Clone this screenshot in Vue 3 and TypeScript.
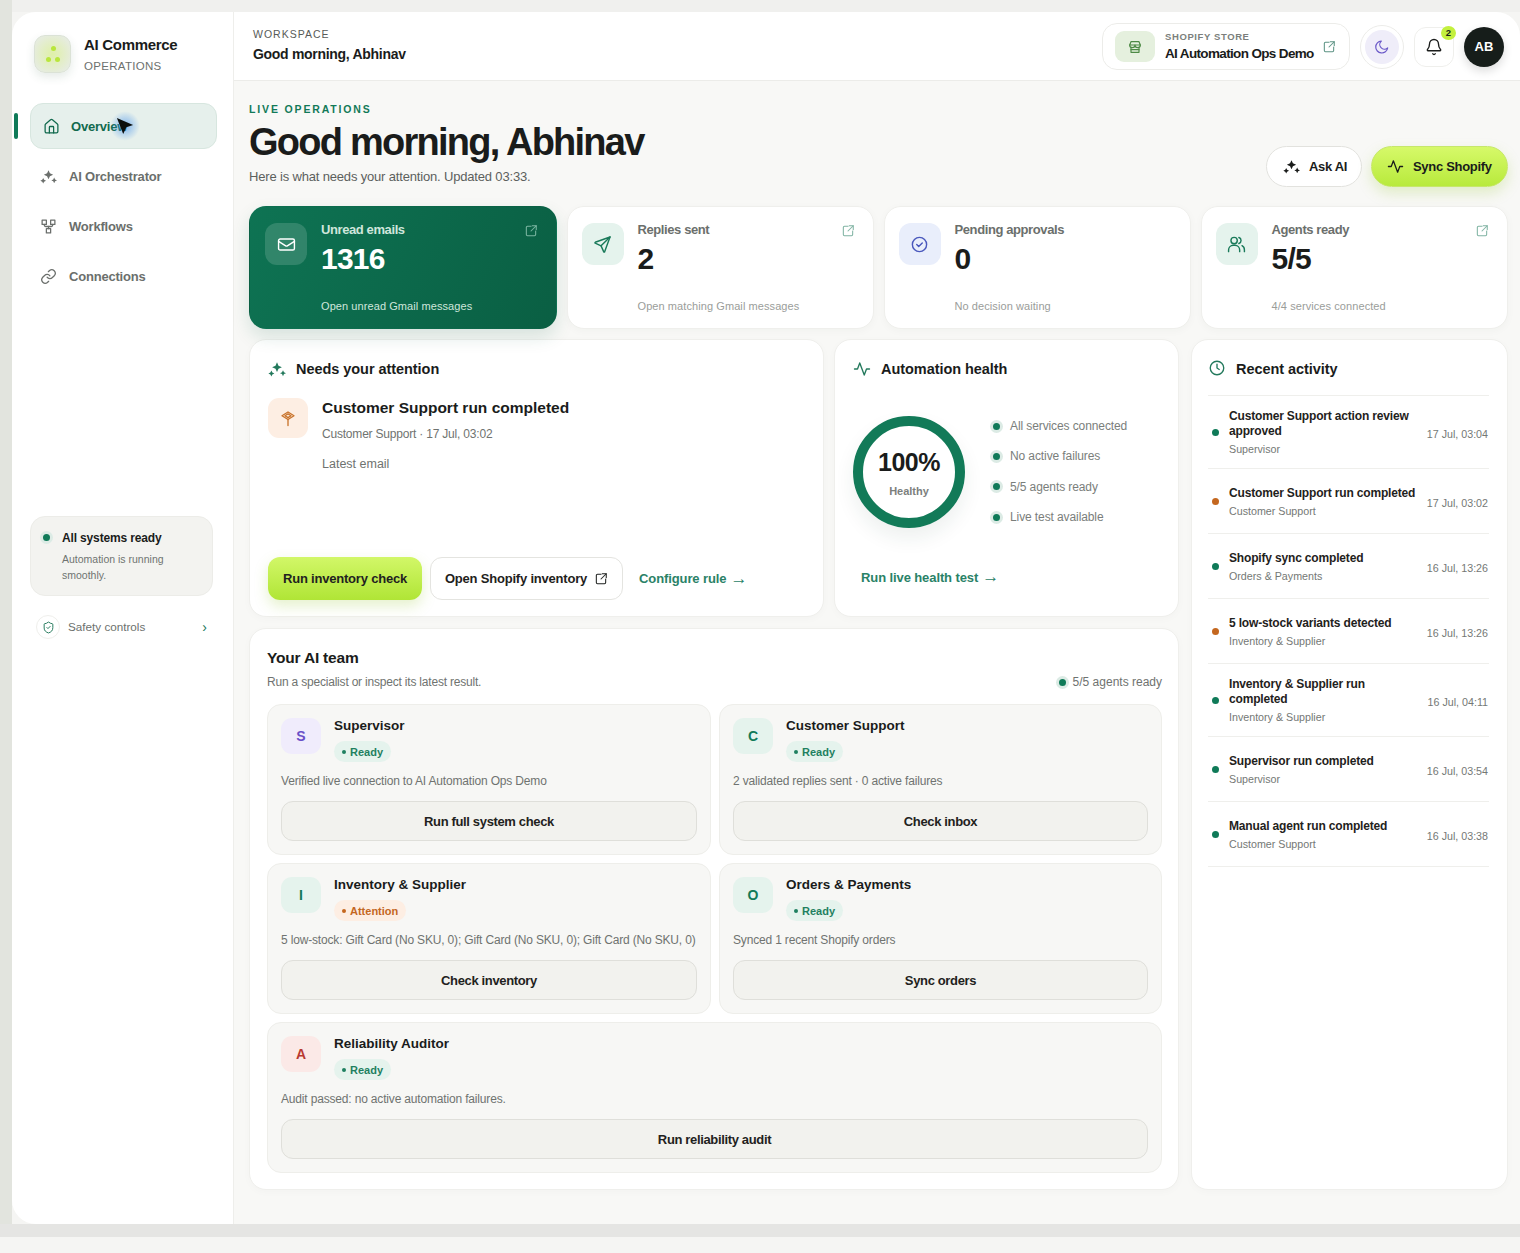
<script setup lang="ts">
import { h } from 'vue'

const paths: Record<string, string[]> = {
  home: ['M15 21v-8a1 1 0 0 0-1-1h-4a1 1 0 0 0-1 1v8', 'M3 10a2 2 0 0 1 .7-1.5l7-6a2 2 0 0 1 2.6 0l7 6a2 2 0 0 1 .7 1.5v9a2 2 0 0 1-2 2H5a2 2 0 0 1-2-2z'],
  workflow: ['M3 3h6v6H3z', 'M15 3h6v6h-6z', 'M9 15h6v6H9z', 'M6 9v1a2 2 0 0 0 2 2h8a2 2 0 0 0 2-2V9', 'M12 12v3'],
  chain: ['M10 13a5 5 0 0 0 7.5.5l3-3a5 5 0 0 0-7-7l-1.700 1.700', 'M14 11a5 5 0 0 0-7.500-.5l-3 3a5 5 0 0 0 7 7l1.700-1.700'],
  mail: ['M4 5h16a2 2 0 0 1 2 2v10a2 2 0 0 1-2 2H4a2 2 0 0 1-2-2V7a2 2 0 0 1 2-2z', 'm22 8-8.970 5.700a1.940 1.940 0 0 1-2.060 0L2 8'],
  send: ['M21.500 2.500 2.800 9.200a.6.6 0 0 0 0 1.100l7.400 3.400 3.400 7.600a.6.6 0 0 0 1.100 0z', 'M21.500 2.500 10.200 13.700'],
  check: ['M12 3a9 9 0 1 0 0 18 9 9 0 0 0 0-18z', 'm8.500 12 2.500 2.500 4.500-4.500'],
  users: ['M9 3a4 4 0 1 0 0 8 4 4 0 0 0 0-8z', 'M2 21v-2a6 6 0 0 1 6-6h2a6 6 0 0 1 6 6v2', 'M15 3.200a4 4 0 0 1 0 7.600', 'M19 13.500a6 6 0 0 1 3 5.500v2'],
  out: ['M12 4H6a2 2 0 0 0-2 2v12a2 2 0 0 0 2 2h12a2 2 0 0 0 2-2v-6', 'M14 3h7v7', 'M21 3l-9 9'],
  store: ['M6 4h12l2 5H4z', 'M4 9a2.500 2.500 0 0 0 8 0 2.500 2.500 0 0 0 8 0', 'M6 13v7h12v-7', 'M6 16h12'],
  moon: ['M20.500 13.500A9 9 0 1 1 11 3a7 7 0 0 0 9.500 10.500z'],
  bell: ['M10.300 21a2 2 0 0 0 3.400 0', 'M3.300 15.300A1 1 0 0 0 4 17h16a1 1 0 0 0 .7-1.700C19.400 14 18 12.500 18 8A6 6 0 0 0 6 8c0 4.500-1.400 6-2.700 7.300'],
  pulse: ['M22 12h-4l-3 8L9 4l-3 8H2'],
  clock: ['M12 3a9 9 0 1 0 0 18 9 9 0 0 0 0-18z', 'M12 7v5l3 2'],
  shield: ['M20 13c0 5-3.500 7.500-7.700 9a1 1 0 0 1-.6 0C7.500 20.500 4 18 4 13V6a1 1 0 0 1 1-1c2 0 4.500-1.200 6.200-2.700a1.200 1.200 0 0 1 1.600 0C14.500 3.800 17 5 19 5a1 1 0 0 1 1 1z', 'm9 12 2 2 4-4'],
  sign: ['M12 4l8 5-8 5-8-5z', 'M8 9l4-2.500 4 2.500-4 2.500z', 'M12 14v8'],
}

const Icon = (props: { name: string }) =>
  h(
    'svg',
    {
      viewBox: '0 0 24 24',
      fill: 'none',
      stroke: 'currentColor',
      'stroke-width': 1.8,
      'stroke-linecap': 'round',
      'stroke-linejoin': 'round',
    },
    paths[props.name].map((d) => h('path', { d })),
  )
Icon.props = ['name']

// four-point stars, the product's "AI" mark
const Stars = () =>
  h('svg', { viewBox: '0 0 24 24', fill: 'currentColor' }, [
    h('path', { d: 'M12 3l2 4.500 4.500 2-4.500 2-2 4.500-2-4.500-4.500-2 4.500-2z' }),
    h('path', { d: 'M4.500 14l1.300 2.700 2.700 1.300-2.700 1.300-1.300 2.700-1.300-2.700L.5 18l2.700-1.300z' }),
    h('path', { d: 'M20 13.500l1.300 2.700 2.700 1.300-2.700 1.300-1.300 2.700-1.300-2.700-2.700-1.300 2.700-1.300z' }),
  ])

const navItems = [
  { label: 'AI Orchestrator', icon: 'stars' },
  { label: 'Workflows', icon: 'workflow' },
  { label: 'Connections', icon: 'chain' },
]

const kpis = [
  { label: 'Unread emails', value: '1316', note: 'Open unread Gmail messages', icon: 'mail', tone: 'hero', link: true },
  { label: 'Replies sent', value: '2', note: 'Open matching Gmail messages', icon: 'send', tone: 'green', link: true },
  { label: 'Pending approvals', value: '0', note: 'No decision waiting', icon: 'check', tone: 'blue', link: false },
  { label: 'Agents ready', value: '5/5', note: '4/4 services connected', icon: 'users', tone: 'green', link: true },
]

const healthItems = ['All services connected', 'No active failures', '5/5 agents ready', 'Live test available']

const agents = [
  { letter: 'S', name: 'Supervisor', status: 'Ready', text: 'Verified live connection to AI Automation Ops Demo', action: 'Run full system check', tone: 'violet' },
  { letter: 'C', name: 'Customer Support', status: 'Ready', text: '2 validated replies sent · 0 active failures', action: 'Check inbox', tone: 'mint' },
  { letter: 'I', name: 'Inventory & Supplier', status: 'Attention', text: '5 low-stock: Gift Card (No SKU, 0); Gift Card (No SKU, 0); Gift Card (No SKU, 0)', action: 'Check inventory', tone: 'mint' },
  { letter: 'O', name: 'Orders & Payments', status: 'Ready', text: 'Synced 1 recent Shopify orders', action: 'Sync orders', tone: 'mint' },
  { letter: 'A', name: 'Reliability Auditor', status: 'Ready', text: 'Audit passed: no active automation failures.', action: 'Run reliability audit', tone: 'red' },
]

const activity = [
  { title: 'Customer Support action review approved', sub: 'Supervisor', time: '17 Jul, 03:04', warn: false },
  { title: 'Customer Support run completed', sub: 'Customer Support', time: '17 Jul, 03:02', warn: true },
  { title: 'Shopify sync completed', sub: 'Orders & Payments', time: '16 Jul, 13:26', warn: false },
  { title: '5 low-stock variants detected', sub: 'Inventory & Supplier', time: '16 Jul, 13:26', warn: true },
  { title: 'Inventory & Supplier run completed', sub: 'Inventory & Supplier', time: '16 Jul, 04:11', warn: false },
  { title: 'Supervisor run completed', sub: 'Supervisor', time: '16 Jul, 03:54', warn: false },
  { title: 'Manual agent run completed', sub: 'Customer Support', time: '16 Jul, 03:38', warn: false },
]
</script>

<template>
  <div class="page">
    <div class="frame">
      <aside class="sidebar">
        <div class="brand">
          <div class="logo">
            <span class="seed seed-top"></span>
            <span class="seed seed-left"></span>
            <span class="seed seed-right"></span>
          </div>
          <div>
            <div class="brand-name">AI Commerce</div>
            <div class="brand-sub">OPERATIONS</div>
          </div>
        </div>

        <nav class="nav">
          <span class="nav-marker"></span>
          <a class="nav-item nav-active">
            <Icon name="home" class="nav-icon" />
            <span>Overview</span>
          </a>
          <a v-for="item in navItems" :key="item.label" class="nav-item">
            <Stars v-if="item.icon === 'stars'" class="nav-icon" />
            <Icon v-else :name="item.icon" class="nav-icon" />
            <span>{{ item.label }}</span>
          </a>
          <!-- pointer caught in the capture -->
          <span class="cursor-glow"></span>
          <svg class="cursor" viewBox="0 0 20 20">
            <path d="M1 1l18 8-7.500 2.500L8 19z" fill="#0b0f0d" />
          </svg>
        </nav>

        <div class="system-card">
          <span class="dot dot-halo"></span>
          <div>
            <div class="system-title">All systems ready</div>
            <div class="system-text">Automation is running smoothly.</div>
          </div>
        </div>

        <div class="safety">
          <span class="safety-icon"><Icon name="shield" /></span>
          <span class="safety-label">Safety controls</span>
          <span class="safety-arrow">›</span>
        </div>
      </aside>

      <div class="content">
        <header class="topbar">
          <div class="topbar-left">
            <div class="workspace">WORKSPACE</div>
            <div class="greeting">Good morning, Abhinav</div>
          </div>
          <div class="topbar-right">
            <div class="store">
              <span class="store-icon"><Icon name="store" /></span>
              <div class="store-text">
                <div class="store-label">SHOPIFY STORE</div>
                <div class="store-name">AI Automation Ops Demo</div>
              </div>
              <Icon name="out" class="store-out" />
            </div>
            <div class="theme-ring">
              <span class="theme-btn"><Icon name="moon" /></span>
            </div>
            <div class="bell">
              <Icon name="bell" />
              <span class="bell-badge">2</span>
            </div>
            <div class="avatar">AB</div>
          </div>
        </header>

        <main class="main">
          <section class="hero">
            <div>
              <div class="eyebrow">LIVE OPERATIONS</div>
              <h1>Good morning, Abhinav</h1>
              <p>Here is what needs your attention. Updated 03:33.</p>
            </div>
            <div class="hero-actions">
              <button class="ask"><Stars />Ask AI</button>
              <button class="sync"><Icon name="pulse" />Sync Shopify</button>
            </div>
          </section>

          <section class="kpis">
            <div v-for="kpi in kpis" :key="kpi.label" class="kpi" :class="{ 'kpi-hero': kpi.tone === 'hero' }">
              <span class="kpi-icon" :class="'tone-' + kpi.tone"><Icon :name="kpi.icon" /></span>
              <div class="kpi-body">
                <div class="kpi-label">{{ kpi.label }}</div>
                <div class="kpi-value">{{ kpi.value }}</div>
                <div class="kpi-note">{{ kpi.note }}</div>
              </div>
              <Icon v-if="kpi.link" name="out" class="kpi-out" />
            </div>
          </section>

          <section class="board">
            <div class="board-left">
              <div class="row-two">
                <div class="card attention">
                  <h2 class="card-title"><Stars class="title-icon" />Needs your attention</h2>
                  <div class="attention-item">
                    <span class="attention-icon"><Icon name="sign" /></span>
                    <div>
                      <div class="attention-title">Customer Support run completed</div>
                      <div class="attention-meta">Customer Support · 17 Jul, 03:02</div>
                      <div class="attention-text">Latest email</div>
                    </div>
                  </div>
                  <div class="attention-actions">
                    <button class="primary">Run inventory check</button>
                    <button class="secondary">Open Shopify inventory <Icon name="out" /></button>
                    <a class="text-link">Configure rule<span class="arrow">→</span></a>
                  </div>
                </div>

                <div class="card health">
                  <h2 class="card-title"><Icon name="pulse" class="title-icon" />Automation health</h2>
                  <div class="health-body">
                    <div class="ring">
                      <div class="ring-value">100%</div>
                      <div class="ring-label">Healthy</div>
                    </div>
                    <ul class="health-list">
                      <li v-for="item in healthItems" :key="item"><span class="dot dot-halo"></span>{{ item }}</li>
                    </ul>
                  </div>
                  <a class="text-link health-link">Run live health test<span class="arrow">→</span></a>
                </div>
              </div>

              <div class="card team">
                <div class="team-head">
                  <div>
                    <h2 class="team-title">Your AI team</h2>
                    <div class="team-sub">Run a specialist or inspect its latest result.</div>
                  </div>
                  <div class="team-ready"><span class="dot dot-halo"></span>5/5 agents ready</div>
                </div>
                <div class="agents">
                  <div v-for="agent in agents" :key="agent.name" class="agent" :class="{ 'agent-wide': agent.letter === 'A' }">
                    <div class="agent-top">
                      <span class="agent-letter" :class="'letter-' + agent.tone">{{ agent.letter }}</span>
                      <div>
                        <div class="agent-name">{{ agent.name }}</div>
                        <span class="badge" :class="{ 'badge-warn': agent.status === 'Attention' }">
                          <i></i>{{ agent.status }}
                        </span>
                      </div>
                    </div>
                    <div class="agent-text">{{ agent.text }}</div>
                    <button class="agent-btn">{{ agent.action }}</button>
                  </div>
                </div>
              </div>
            </div>

            <div class="card activity">
              <h2 class="card-title activity-title"><Icon name="clock" class="title-icon" />Recent activity</h2>
              <div v-for="row in activity" :key="row.title + row.time" class="activity-row">
                <span class="dot" :class="{ 'dot-warn': row.warn }"></span>
                <div class="activity-main">
                  <div class="activity-name">{{ row.title }}</div>
                  <div class="activity-sub">{{ row.sub }}</div>
                </div>
                <div class="activity-time">{{ row.time }}</div>
              </div>
            </div>
          </section>
        </main>
      </div>
    </div>
  </div>
</template>

<style>
html,
body {
  margin: 0;
  background: #f5f5f3;
}
</style>

<style scoped>
.page {
  width: 1520px;
  height: 1253px;
  box-sizing: border-box;
  padding: 12px 0 0 12px;
  overflow: hidden;
  font-family: 'Liberation Sans', Arial, sans-serif;
  color: #1a1c1b;
  background:
    linear-gradient(#e5e5e3, #e5e5e3) 0 1224px / 100% 13px no-repeat,
    linear-gradient(90deg, #e2e4de 12px, transparent 12px) 0 0 / 100% 1237px no-repeat,
    linear-gradient(#f0f0ee, #f0f0ee) 0 0 / 100% 12px no-repeat,
    #f5f5f3;
}

.frame {
  display: flex;
  width: 1508px;
  height: 1212px;
  border-radius: 24px 24px 0 24px;
  overflow: hidden;
  background: #f8f8f6;
}

.sidebar {
  flex: 0 0 220px;
  box-sizing: border-box;
  padding: 23px 16px 0 18px;
  background: #fff;
  border-right: 1px solid #eeeeeb;
}

.brand {
  display: flex;
  align-items: center;
  gap: 13px;
  margin-left: 4px;
  height: 38px;
}

.logo {
  position: relative;
  flex: none;
  width: 37px;
  height: 38px;
  border: 1px solid #dbe2d6;
  border-radius: 11px;
  box-sizing: border-box;
  background: radial-gradient(circle at 50% 50%, #dff0a8, #e6ecdf 80%);
  box-shadow: 0 4px 10px rgba(40, 90, 60, 0.12);
}

.seed {
  position: absolute;
  width: 5px;
  height: 5px;
  border-radius: 50%;
  background: #b9e63c;
}

.seed-top {
  left: 16px;
  top: 10px;
}

.seed-left {
  left: 11px;
  top: 21px;
}

.seed-right {
  left: 20px;
  top: 21px;
}

.brand-name {
  font-size: 15px;
  font-weight: 700;
  letter-spacing: -0.3px;
  line-height: 20px;
}

.brand-sub {
  margin-top: 3px;
  font-size: 11.5px;
  letter-spacing: 0.3px;
  line-height: 16px;
  color: #6d716e;
}

.nav {
  position: relative;
  display: flex;
  flex-direction: column;
  gap: 4px;
  margin-top: 30px;
}

.nav-marker {
  position: absolute;
  left: -16px;
  top: 10px;
  width: 4px;
  height: 26px;
  border-radius: 2px;
  background: #0f7a58;
}

.nav-item {
  display: flex;
  align-items: center;
  gap: 12px;
  height: 46px;
  padding-left: 10px;
  font-size: 13px;
  font-weight: 700;
  letter-spacing: -0.2px;
  color: #6b6f6c;
}

.nav-active {
  width: 187px;
  box-sizing: border-box;
  padding-left: 12px;
  gap: 11px;
  border: 1px solid #d7e6df;
  border-radius: 13px;
  background: #e6f0ec;
  color: #126a4e;
}

.nav-icon {
  flex: none;
  width: 17px;
  height: 17px;
}

.cursor-glow {
  position: absolute;
  left: 80px;
  top: 8px;
  width: 30px;
  height: 30px;
  border-radius: 50%;
  background: radial-gradient(circle, rgba(60, 140, 235, 0.6), rgba(60, 140, 235, 0) 70%);
}

.cursor {
  position: absolute;
  left: 86px;
  top: 14px;
  width: 18px;
  height: 18px;
}

.system-card {
  display: flex;
  align-items: flex-start;
  gap: 12px;
  width: 183px;
  height: 80px;
  box-sizing: border-box;
  margin-top: 217px;
  padding: 14px 12px;
  border: 1px solid #ecece8;
  border-radius: 15px;
  background: #f3f3f0;
}

.system-title {
  font-size: 12px;
  font-weight: 700;
  letter-spacing: -0.15px;
  line-height: 15px;
}

.system-text {
  margin-top: 5px;
  font-size: 10.5px;
  line-height: 16px;
  color: #6f7370;
}

.dot {
  display: inline-block;
  flex: none;
  width: 7px;
  height: 7px;
  border-radius: 50%;
  background: #0f7a58;
}

.dot-halo {
  box-shadow: 0 0 0 3px #dcebe5;
}

.dot-warn {
  background: #c4671f;
}

.system-card .dot {
  margin-top: 3px;
}

.safety {
  display: flex;
  align-items: center;
  width: 183px;
  margin-top: 19px;
  padding-left: 6px;
  box-sizing: border-box;
}

.safety-icon {
  display: flex;
  align-items: center;
  justify-content: center;
  width: 22px;
  height: 22px;
  border: 1px solid #efefec;
  border-radius: 50%;
  color: #23795c;
}

.safety-icon svg {
  width: 13px;
  height: 13px;
}

.safety-label {
  margin-left: 8px;
  margin-top: -2px;
  font-size: 11.7px;
  color: #6d716e;
}

.safety-arrow {
  margin-left: auto;
  margin-right: 6px;
  font-size: 14px;
  color: #23795c;
}

.content {
  flex: 1;
  min-width: 0;
}

.topbar {
  display: flex;
  align-items: center;
  justify-content: space-between;
  height: 69px;
  box-sizing: border-box;
  padding: 0 16px 0 19px;
  background: #fff;
  border-bottom: 1px solid #ecece9;
}

.topbar-left {
  margin-bottom: 4px;
}

.workspace {
  font-size: 10.5px;
  letter-spacing: 1px;
  line-height: 14px;
  color: #575b58;
}

.greeting {
  margin-top: 5px;
  font-size: 14px;
  font-weight: 700;
  letter-spacing: -0.3px;
  line-height: 16px;
}

.topbar-right {
  display: flex;
  align-items: center;
  margin-top: 1px;
}

.store {
  display: flex;
  align-items: center;
  width: 248px;
  height: 47px;
  box-sizing: border-box;
  padding: 0 13px 0 12px;
  border: 1px solid #ecece9;
  border-radius: 15px;
}

.store-icon {
  display: flex;
  align-items: center;
  justify-content: center;
  flex: none;
  width: 40px;
  height: 31px;
  border-radius: 9px;
  background: #e5f0de;
  color: #4d8a45;
}

.store-icon svg {
  width: 16px;
  height: 16px;
}

.store-text {
  flex: 1;
  margin-left: 10px;
}

.store-label {
  font-size: 9.5px;
  letter-spacing: 0.6px;
  font-weight: 700;
  line-height: 12px;
  color: #7b7f7c;
}

.store-name {
  margin-top: 3px;
  font-size: 13.5px;
  font-weight: 700;
  letter-spacing: -0.65px;
  line-height: 16px;
  white-space: nowrap;
}

.store-out {
  flex: none;
  width: 14px;
  height: 14px;
  color: #5c9384;
}

.theme-ring {
  display: flex;
  align-items: center;
  justify-content: center;
  width: 44px;
  height: 44px;
  box-sizing: border-box;
  margin-left: 10px;
  border: 1px solid #ecece9;
  border-radius: 50%;
}

.theme-btn {
  display: flex;
  align-items: center;
  justify-content: center;
  width: 34px;
  height: 34px;
  border-radius: 50%;
  background: #efedf9;
  color: #6a58c8;
}

.theme-btn svg {
  width: 16px;
  height: 16px;
}

.bell {
  position: relative;
  display: flex;
  align-items: center;
  justify-content: center;
  width: 40px;
  height: 40px;
  box-sizing: border-box;
  margin-left: 10px;
  border: 1px solid #efefec;
  border-radius: 12px;
}

.bell svg {
  width: 18px;
  height: 18px;
}

.bell-badge {
  position: absolute;
  right: -3px;
  top: -2px;
  width: 15px;
  height: 14px;
  border-radius: 50%;
  background: #c3f03e;
  font-size: 9.5px;
  font-weight: 700;
  line-height: 14px;
  text-align: center;
}

.avatar {
  display: flex;
  align-items: center;
  justify-content: center;
  width: 40px;
  height: 40px;
  margin-left: 10px;
  border-radius: 50%;
  background: #161d1a;
  color: #fff;
  font-size: 13px;
  font-weight: 700;
  box-shadow: 0 4px 10px rgba(0, 0, 0, 0.14);
}

.main {
  padding: 2px 12px 0 15px;
}

.hero {
  display: flex;
  align-items: flex-end;
  justify-content: space-between;
  height: 103px;
}

.eyebrow {
  font-size: 10.5px;
  font-weight: 700;
  letter-spacing: 1.85px;
  line-height: 13px;
  color: #127a58;
}

h1 {
  margin: 3px 0 0;
  font-size: 38px;
  font-weight: 700;
  letter-spacing: -1.75px;
  line-height: 46px;
}

.hero p {
  margin: 3px 0 0;
  font-size: 13px;
  letter-spacing: -0.17px;
  line-height: 18px;
  color: #5c605d;
}

.hero-actions {
  display: flex;
  gap: 9px;
  margin-bottom: -1px;
}

.hero-actions button {
  display: flex;
  align-items: center;
  gap: 9px;
  height: 41px;
  border-radius: 21px;
  font-family: inherit;
  font-size: 13px;
  font-weight: 700;
  letter-spacing: -0.3px;
  color: #1a1c1b;
}

.hero-actions svg {
  flex: none;
  width: 17px;
  height: 17px;
}

.ask {
  width: 96px;
  padding: 0 0 0 16px;
  border: 1px solid #e2e2de;
  background: #fff;
}

.sync {
  width: 137px;
  padding: 0 0 0 15px;
  border: 1px solid #c6e76a;
  background: linear-gradient(#d6f969, #b8ea3c);
  box-shadow: 0 6px 14px rgba(150, 200, 50, 0.25);
}

.kpis {
  display: grid;
  grid-template-columns: 307.5px 307px 307px 307px;
  gap: 10px;
  margin-top: 20px;
}

.kpi {
  position: relative;
  display: flex;
  height: 123px;
  box-sizing: border-box;
  padding: 16px 16px 16px 14px;
  border: 1px solid #efefec;
  border-radius: 17px;
  background: #fff;
  box-shadow: 0 2px 8px rgba(40, 50, 45, 0.03);
}

.kpi-hero {
  padding-left: 15px;
  border-color: transparent;
  background: linear-gradient(115deg, #0e7353, #0a5f43);
  box-shadow: 0 8px 18px rgba(15, 100, 70, 0.14);
  color: #fff;
}

.kpi-icon {
  display: flex;
  align-items: center;
  justify-content: center;
  flex: none;
  width: 42px;
  height: 42px;
  border-radius: 12px;
}

.kpi-icon svg {
  width: 19px;
  height: 19px;
}

.tone-hero {
  background: rgba(255, 255, 255, 0.15);
  color: #fff;
}

.tone-green {
  background: #e5f3ed;
  color: #1a7a5a;
}

.tone-blue {
  background: #e9eefb;
  color: #4a58bd;
}

.kpi-body {
  margin-left: 14px;
}

.kpi-label {
  margin-top: -2px;
  font-size: 13px;
  font-weight: 700;
  letter-spacing: -0.4px;
  line-height: 18px;
  color: #6b6f6c;
}

.kpi-value {
  margin-top: 1px;
  font-size: 30px;
  font-weight: 700;
  line-height: 38px;
  letter-spacing: -0.8px;
}

.kpi-note {
  margin-top: 20px;
  font-size: 11px;
  letter-spacing: 0.08px;
  line-height: 16px;
  color: #9a9d9a;
}

.kpi-hero .kpi-label,
.kpi-hero .kpi-note {
  color: #cfe6dc;
}

.kpi-out {
  position: absolute;
  top: 17px;
  right: 18px;
  width: 14px;
  height: 14px;
  color: #7fb3a2;
}

.kpi-hero .kpi-out {
  color: #7cb7a2;
}

.board {
  display: flex;
  gap: 12px;
  margin-top: 10px;
}

.board-left {
  display: flex;
  flex-direction: column;
  gap: 11px;
  width: 930px;
}

.row-two {
  display: flex;
  gap: 10px;
}

.card {
  box-sizing: border-box;
  border: 1px solid #efefec;
  border-radius: 17px;
  background: #fff;
  box-shadow: 0 2px 8px rgba(40, 50, 45, 0.025);
}

.card-title {
  display: flex;
  align-items: center;
  margin: 0;
  font-size: 14.5px;
  font-weight: 700;
  letter-spacing: -0.05px;
  line-height: 20px;
}

.title-icon {
  flex: none;
  width: 18px;
  height: 18px;
  margin-right: 10px;
  color: #23795c;
}

.attention {
  display: flex;
  flex-direction: column;
  width: 575px;
  height: 278px;
  padding: 19px 18px 16px;
}

.attention-item {
  display: flex;
  gap: 14px;
  margin-top: 19px;
}

.attention-icon {
  display: flex;
  align-items: center;
  justify-content: center;
  flex: none;
  width: 40px;
  height: 40px;
  border-radius: 11px;
  background: #fdeee3;
  color: #c9742c;
}

.attention-icon svg {
  width: 18px;
  height: 18px;
}

.attention-title {
  font-size: 15.5px;
  font-weight: 700;
  line-height: 20px;
}

.attention-meta {
  margin-top: 8px;
  font-size: 12px;
  letter-spacing: -0.2px;
  line-height: 16px;
  color: #6f7370;
}

.attention-text {
  margin-top: 14px;
  font-size: 12.5px;
  line-height: 16px;
  color: #6f7370;
}

.attention-actions {
  display: flex;
  align-items: center;
  gap: 8px;
  margin-top: auto;
}

.attention-actions button {
  display: flex;
  align-items: center;
  justify-content: center;
  gap: 7px;
  height: 43px;
  border-radius: 12px;
  font-family: inherit;
  font-size: 13px;
  font-weight: 700;
  letter-spacing: -0.2px;
  color: #1f2220;
}

.primary {
  width: 154px;
  padding: 0;
  border: none;
  background: linear-gradient(#d2f768, #b0e536);
  box-shadow: 0 6px 14px rgba(150, 200, 50, 0.25);
}

.secondary {
  width: 193px;
  padding: 0;
  border: 1px solid #e4e4e0;
  background: #fff;
}

.secondary svg {
  width: 14px;
  height: 14px;
}

.text-link {
  display: inline-flex;
  align-items: center;
  font-size: 13px;
  font-weight: 700;
  letter-spacing: -0.1px;
  color: #2a8267;
}

.arrow {
  margin-left: 4px;
  font-size: 17px;
  font-weight: 400;
  line-height: 16px;
}

.attention-actions .text-link {
  margin-left: 8px;
}

.health {
  display: flex;
  flex-direction: column;
  width: 345px;
  height: 278px;
  padding: 19px 18px;
}

.health-body {
  display: flex;
  margin-top: 37px;
}

.ring {
  display: flex;
  flex-direction: column;
  align-items: center;
  flex: none;
  width: 112px;
  height: 112px;
  box-sizing: border-box;
  border: 10px solid #127a58;
  border-radius: 50%;
  box-shadow: 0 10px 20px rgba(30, 60, 50, 0.08);
}

.ring-value {
  margin-top: 20px;
  font-size: 25px;
  font-weight: 700;
  letter-spacing: -0.5px;
  line-height: 32px;
}

.ring-label {
  margin-top: 6px;
  font-size: 11px;
  font-weight: 700;
  line-height: 14px;
  color: #7c807d;
}

.health-list {
  margin: -5px 0 0 28px;
  padding: 0;
  list-style: none;
}

.health-list li {
  display: flex;
  align-items: center;
  gap: 10px;
  height: 30.3px;
  font-size: 12px;
  letter-spacing: -0.1px;
  color: #7a7e7b;
}

.health-link {
  margin: auto 0 12px 8px;
  align-self: flex-start;
}

.team {
  height: 562px;
  padding: 19px 16px 0 17px;
}

.team-head {
  display: flex;
  align-items: flex-end;
  justify-content: space-between;
}

.team-title {
  margin: 0;
  font-size: 15.5px;
  font-weight: 700;
  letter-spacing: -0.2px;
  line-height: 20px;
}

.team-sub {
  margin-top: 6px;
  font-size: 12px;
  letter-spacing: -0.2px;
  line-height: 16px;
  color: #6f7370;
}

.team-ready {
  display: flex;
  align-items: center;
  gap: 7px;
  font-size: 12px;
  line-height: 16px;
  color: #6f7370;
}

.agents {
  display: grid;
  grid-template-columns: 444px 443px;
  gap: 8px;
  margin-top: 14px;
}

.agent {
  height: 151px;
  box-sizing: border-box;
  padding: 13px 13px;
  border: 1px solid #eeeeea;
  border-radius: 14px;
  background: #f7f7f5;
}

.agent-wide {
  grid-column: 1 / -1;
}

.agent-top {
  display: flex;
  gap: 13px;
}

.agent-letter {
  display: flex;
  align-items: center;
  justify-content: center;
  flex: none;
  width: 40px;
  height: 36px;
  border-radius: 11px;
  font-size: 14px;
  font-weight: 700;
}

.letter-violet {
  background: #f0ecfc;
  color: #6a50c8;
}

.letter-mint {
  background: #e5f3ed;
  color: #127a58;
}

.letter-red {
  background: #fbe9e7;
  color: #b83a32;
}

.agent-name {
  font-size: 13.5px;
  font-weight: 700;
  line-height: 16px;
}

.badge {
  display: inline-flex;
  align-items: center;
  gap: 4px;
  height: 21px;
  margin-top: 7px;
  padding: 0 8px;
  border-radius: 11px;
  background: #e5f3ed;
  font-size: 11px;
  font-weight: 700;
  color: #1f8060;
}

.badge i {
  width: 4px;
  height: 4px;
  border-radius: 50%;
  background: currentColor;
}

.badge-warn {
  background: #fdeee3;
  color: #c4671f;
}

.agent-text {
  margin-top: 11px;
  font-size: 12px;
  letter-spacing: -0.17px;
  line-height: 16px;
  color: #6f7370;
  white-space: nowrap;
}

.agent-btn {
  display: block;
  width: 100%;
  height: 40px;
  margin-top: 12px;
  padding: 0;
  border: 1px solid #dfdfda;
  border-radius: 12px;
  background: #f2f2ee;
  font-family: inherit;
  font-size: 13px;
  font-weight: 700;
  letter-spacing: -0.35px;
  color: #1f2220;
}

.activity {
  width: 317px;
  height: 851px;
  padding: 19px 18px 19px 16px;
}

.activity-title {
  height: 36px;
  align-items: flex-start;
  border-bottom: 1px solid #efefec;
}

.activity-row {
  display: flex;
  align-items: center;
  min-height: 65px;
  box-sizing: border-box;
  padding: 13px 1px 12px 4px;
  border-bottom: 1px solid #efefec;
}

.activity-main {
  flex: 1;
  min-width: 0;
  margin-left: 10px;
}

.activity-name {
  max-width: 195px;
  font-size: 12px;
  font-weight: 700;
  letter-spacing: -0.17px;
  line-height: 15px;
  color: #1f2220;
}

.activity-sub {
  margin-top: 3px;
  font-size: 10.7px;
  line-height: 14px;
  color: #747875;
}

.activity-time {
  flex: none;
  margin-top: 2px;
  font-size: 10.7px;
  color: #747875;
}
</style>
